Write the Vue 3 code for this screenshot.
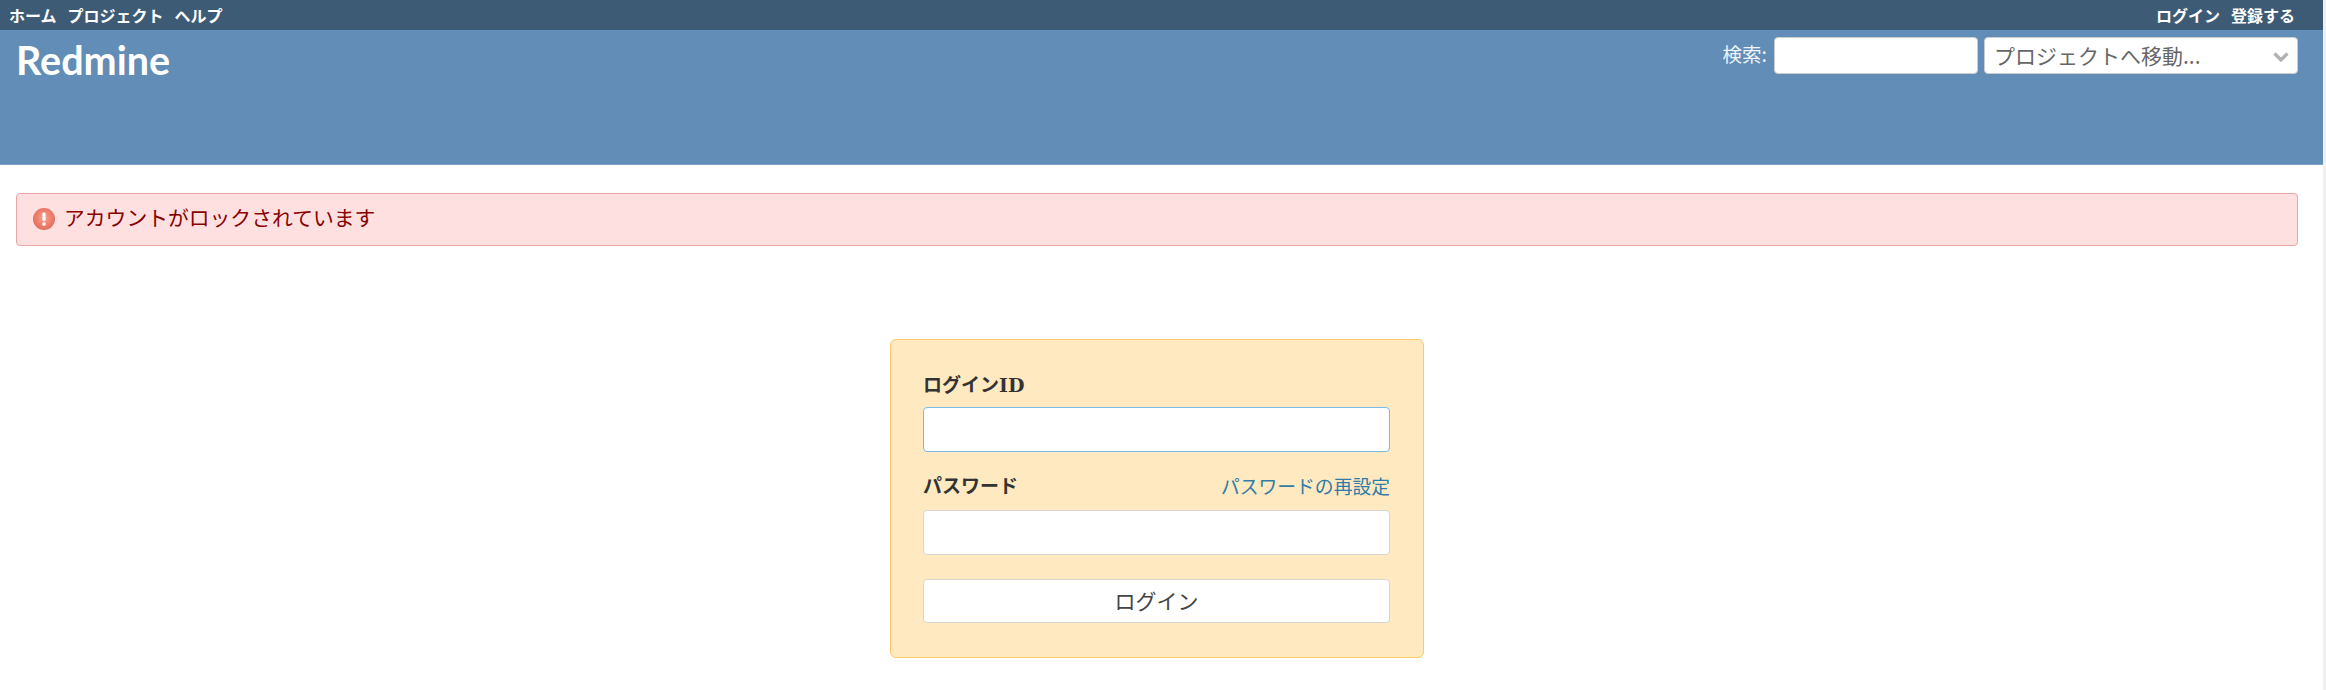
<template>
  <div class="page">
    <div class="main">
      <div class="top-menu">
        <div class="menu-group">
          <a>ホーム</a>
          <a>プロジェクト</a>
          <a>ヘルプ</a>
        </div>
        <div class="menu-group">
          <a>ログイン</a>
          <a>登録する</a>
        </div>
      </div>
      <div class="header">
        <h1 class="title">Redmine</h1>
        <div class="quick-search">
          <label class="search-label">検索:</label>
          <input class="search-input" type="text" />
          <div class="jump-box">
            <select class="jump-select">
              <option>プロジェクトへ移動...</option>
            </select>
            <svg class="jump-arrow" width="16" height="10" viewBox="0 0 16 10">
              <path d="M1.5 1.5l6.5 6.5 6.5-6.5" fill="none" stroke="#b0b0b0" stroke-width="3.2" />
            </svg>
          </div>
        </div>
      </div>
      <div class="content">
        <div class="flash">
          <svg class="flash-icon" width="24" height="24" viewBox="0 0 24 24">
            <defs>
              <radialGradient id="errorFill" cx="50%" cy="45%" r="55%">
                <stop offset="0%" stop-color="#f7a594" />
                <stop offset="70%" stop-color="#ee7a68" />
                <stop offset="100%" stop-color="#d9705f" />
              </radialGradient>
            </defs>
            <circle cx="12" cy="12" r="11" fill="url(#errorFill)" />
            <rect x="10.4" y="5.5" width="3.2" height="8.5" rx="1.4" fill="#fff" />
            <circle cx="12" cy="17" r="1.8" fill="#fff" />
          </svg>
          <span class="flash-text">アカウントがロックされています</span>
        </div>
        <div class="login-box">
          <label class="field-label">ログイン<span class="latin">ID</span></label>
          <input class="field focused" type="text" />
          <div class="password-row">
            <label class="field-label">パスワード</label>
            <a class="lost-link">パスワードの再設定</a>
          </div>
          <input class="field" type="password" />
          <button class="login-button" type="button">ログイン</button>
        </div>
      </div>
    </div>
    <div class="scroll-strip"></div>
  </div>
</template>

<script setup>
</script>

<style>
html,
body {
  margin: 0;
  background: #fff;
  overflow: hidden;
}
</style>

<style scoped>
.page {
  display: flex;
  height: 690px;
  overflow: hidden;
  font-family: "Noto Sans CJK JP", "Noto Sans", sans-serif;
  color: #333;
}
.main {
  flex: 1;
  min-width: 0;
}
.scroll-strip {
  width: 3px;
  background: #f0f0f0;
}
.top-menu {
  height: 30px;
  background: #3e5b76;
  display: flex;
  justify-content: space-between;
  align-items: center;
  padding: 0 28px 0 9px;
  font-size: 16px;
  font-weight: 700;
  color: #fff;
  line-height: 28px;
}
.menu-group {
  display: flex;
  gap: 11px;
}
.header {
  height: 134px;
  background: #628db6;
  border-bottom: 1px solid #7ea3c6;
  display: flex;
  justify-content: space-between;
  align-items: flex-start;
  padding: 0 25px 0 16px;
}
.title {
  margin: 7px 0 0;
  font-family: Lato, "Noto Sans", sans-serif;
  font-size: 39.5px;
  line-height: 46px;
  font-weight: 700;
  color: #fff;
}
.quick-search {
  display: flex;
  align-items: center;
  margin-top: 7px;
}
.search-label {
  color: #f0f5fa;
  font-size: 19.5px;
  margin: -4px 7px 0 0;
}
.search-input {
  width: 204px;
  height: 37px;
  box-sizing: border-box;
  border: 1px solid #ccc;
  border-radius: 4px;
  background: #fff;
  margin-right: 6px;
}
.jump-box {
  position: relative;
  width: 314px;
  height: 37px;
}
.jump-select {
  width: 100%;
  height: 100%;
  appearance: none;
  box-sizing: border-box;
  border: 1px solid #ccc;
  border-radius: 4px;
  background: #fff;
  padding: 0 9px 2px;
  font-family: inherit;
  font-size: 21px;
  color: #666;
}
.jump-arrow {
  position: absolute;
  right: 9px;
  top: 15px;
}
.content {
  padding: 28px 25px 0 16px;
}
.flash {
  height: 53px;
  box-sizing: border-box;
  display: flex;
  align-items: center;
  gap: 8px;
  padding-left: 15px;
  background: #ffe0e1;
  border: 1px solid #e9a6a6;
  border-radius: 4px;
  font-size: 20.8px;
  color: #880000;
}
.flash-icon {
  flex: none;
  margin-top: -2px;
}
.flash-text {
  margin-top: -5px;
}
.login-box {
  width: 534px;
  height: 319px;
  box-sizing: border-box;
  margin: 93px auto 0;
  padding: 29px 33px 0 32px;
  background: #fee9c0;
  border: 1px solid #fdc966;
  border-radius: 6px;
  display: flex;
  flex-direction: column;
}
.field-label {
  font-size: 19px;
  font-weight: 700;
  line-height: 30px;
  color: #333;
}
.latin {
  font-family: "DejaVu Serif", serif;
  font-size: 19px;
}
.field {
  height: 45px;
  box-sizing: border-box;
  width: 100%;
  margin-top: 7px;
  border: 1px solid #d6d6d6;
  border-radius: 4px;
  background: #fff;
}
.focused {
  border-color: #7cbbe4;
}
.password-row {
  display: flex;
  justify-content: space-between;
  align-items: center;
  margin-top: 18px;
  margin-bottom: 3px;
}
.lost-link {
  font-size: 18.8px;
  color: #2f7ca8;
}
.login-button {
  height: 44px;
  margin-top: 24px;
  padding: 0 0 3px;
  box-sizing: border-box;
  border: 1px solid #d6d6d6;
  border-radius: 4px;
  background: #fff;
  font-family: inherit;
  font-size: 21px;
  color: #444;
}
</style>
